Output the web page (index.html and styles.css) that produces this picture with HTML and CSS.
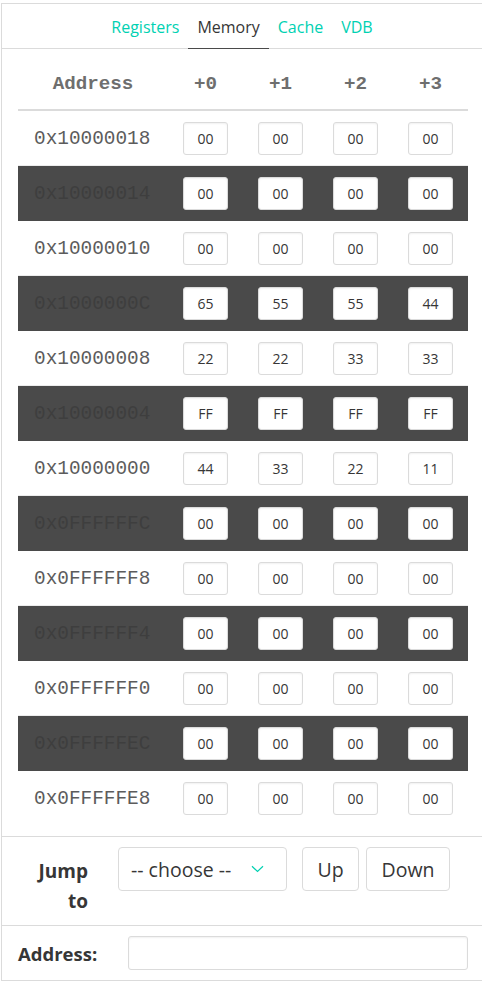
FILE: index.html
```html
<!DOCTYPE html>
<html>
<head>
<meta charset="utf-8">
<link rel="stylesheet" href="styles.css">
</head>
<body>
<div class="panel">
  <nav class="tabs">
    <ul>
      <li><a class="tab">Registers</a></li>
      <li><a class="tab active">Memory</a></li>
      <li><a class="tab">Cache</a></li>
      <li><a class="tab">VDB</a></li>
    </ul>
  </nav>
  <div class="table-wrap">
    <table class="mem">
      <thead>
        <tr><th class="addr-h">Address</th><th>+0</th><th>+1</th><th>+2</th><th>+3</th></tr>
      </thead>
      <tbody>
        <tr><td class="addr">0x10000018</td><td><span class="cell">00</span></td><td><span class="cell">00</span></td><td><span class="cell">00</span></td><td><span class="cell">00</span></td></tr>
        <tr class="dark"><td class="addr">0x10000014</td><td><span class="cell">00</span></td><td><span class="cell">00</span></td><td><span class="cell">00</span></td><td><span class="cell">00</span></td></tr>
        <tr><td class="addr">0x10000010</td><td><span class="cell">00</span></td><td><span class="cell">00</span></td><td><span class="cell">00</span></td><td><span class="cell">00</span></td></tr>
        <tr class="dark"><td class="addr">0x1000000C</td><td><span class="cell">65</span></td><td><span class="cell">55</span></td><td><span class="cell">55</span></td><td><span class="cell">44</span></td></tr>
        <tr><td class="addr">0x10000008</td><td><span class="cell">22</span></td><td><span class="cell">22</span></td><td><span class="cell">33</span></td><td><span class="cell">33</span></td></tr>
        <tr class="dark"><td class="addr">0x10000004</td><td><span class="cell">FF</span></td><td><span class="cell">FF</span></td><td><span class="cell">FF</span></td><td><span class="cell">FF</span></td></tr>
        <tr><td class="addr">0x10000000</td><td><span class="cell">44</span></td><td><span class="cell">33</span></td><td><span class="cell">22</span></td><td><span class="cell">11</span></td></tr>
        <tr class="dark"><td class="addr">0x0FFFFFFC</td><td><span class="cell">00</span></td><td><span class="cell">00</span></td><td><span class="cell">00</span></td><td><span class="cell">00</span></td></tr>
        <tr><td class="addr">0x0FFFFFF8</td><td><span class="cell">00</span></td><td><span class="cell">00</span></td><td><span class="cell">00</span></td><td><span class="cell">00</span></td></tr>
        <tr class="dark"><td class="addr">0x0FFFFFF4</td><td><span class="cell">00</span></td><td><span class="cell">00</span></td><td><span class="cell">00</span></td><td><span class="cell">00</span></td></tr>
        <tr><td class="addr">0x0FFFFFF0</td><td><span class="cell">00</span></td><td><span class="cell">00</span></td><td><span class="cell">00</span></td><td><span class="cell">00</span></td></tr>
        <tr class="dark"><td class="addr">0x0FFFFFEC</td><td><span class="cell">00</span></td><td><span class="cell">00</span></td><td><span class="cell">00</span></td><td><span class="cell">00</span></td></tr>
        <tr class="last"><td class="addr">0x0FFFFFE8</td><td><span class="cell">00</span></td><td><span class="cell">00</span></td><td><span class="cell">00</span></td><td><span class="cell">00</span></td></tr>
      </tbody>
    </table>
  </div>
  <div class="section jump">
    <div class="label jump-label">Jump to</div>
    <div class="controls">
      <div class="select">
        <span class="select-text">-- choose --</span>
        <svg class="chev" width="13" height="8" viewBox="0 0 13 8"><path d="M1 1.2 L6.5 6.5 L12 1.2" fill="none" stroke="#00d1b2" stroke-width="1.2"/></svg>
      </div>
      <div class="btns">
        <button class="btn">Up</button>
        <button class="btn">Down</button>
      </div>
    </div>
  </div>
  <div class="section addr-row">
    <div class="label addr-label">Address:</div>
    <div class="text-input"></div>
  </div>
</div>
</body>
</html>
```

FILE: styles.css
```css
html, body {
  margin: 0;
  padding: 0;
  background: #fff;
  overflow: hidden;
}
body {
  font-family: "Open Sans", "Noto Sans", sans-serif;
  color: #4a4a4a;
}
.panel {
  margin: 3px 0 0 1px;
  width: 481px;
  border: 1px solid #dbdbdb;
  border-right: 0;
  box-sizing: border-box;
}
.tabs {
  border-bottom: 1px solid #dbdbdb;
}
.tabs ul {
  list-style: none;
  margin: 0;
  padding: 0;
  display: flex;
  justify-content: center;
}
.tab {
  display: block;
  padding: 11px 9px 9px;
  font-size: 16px;
  line-height: 24px;
  color: #00d1b2;
  border-bottom: 1px solid transparent;
  margin-bottom: -1px;
}
.tab.active {
  color: #363636;
  border-bottom-color: #4a4a4a;
}
.table-wrap {
  padding: 10px 13px 10px 16px;
}
.mem {
  width: 450px;
  border-collapse: collapse;
  table-layout: fixed;
}
.mem th {
  height: 50px;
  padding: 0;
  font-family: "Liberation Mono", "Courier New", monospace;
  font-weight: bold;
  font-size: 19.2px;
  color: #6e6e6e;
  border-bottom: 2px solid #dbdbdb;
  text-align: center;
  width: 75px;
}
.mem th.addr-h {
  width: 150px;
}
.mem td {
  height: 54px;
  padding: 0;
  text-align: center;
  border-bottom: 1px solid #ececec;
}
.mem tr.last td {
  border-bottom-color: transparent;
}
.mem td.addr {
  font-family: "Liberation Mono", "Courier New", monospace;
  font-size: 19.4px;
  color: #5c5c5c;
  text-align: left;
  padding-left: 16px;
  padding-top: 2px;
  box-sizing: border-box;
}
.mem tr.dark td {
  background: #4a4a4a;
  border-bottom-color: #4a4a4a;
}
.mem tr.dark td.addr {
  color: #3e3e3e;
}
.cell {
  display: inline-block;
  box-sizing: border-box;
  width: 45px;
  height: 33px;
  line-height: 31px;
  border: 1px solid #dbdbdb;
  border-radius: 3px;
  background: #fff;
  font-size: 14px;
  color: #363636;
  vertical-align: middle;
  box-shadow: inset 0 1px 2px rgba(10,10,10,0.06);
}
.section {
  border-top: 1px solid #dbdbdb;
  display: flex;
  align-items: flex-start;
}
.label {
  font-weight: bold;
  color: #363636;
  text-align: right;
  box-sizing: border-box;
}
.jump {
  padding: 10px 0 9px 16px;
}
.jump-label {
  width: 70px;
  margin-right: 30px;
  font-size: 19px;
  line-height: 30px;
  padding-top: 9px;
}
.controls {
  display: flex;
  align-items: center;
  gap: 15px;
}
.select {
  box-sizing: border-box;
  width: 169px;
  height: 44px;
  border: 1px solid #dbdbdb;
  border-radius: 4px;
  display: flex;
  align-items: center;
  justify-content: space-between;
  padding: 1px 22px 0 12px;
  font-size: 19.5px;
  color: #363636;
}
.chev {
  margin-top: -2px;
}
.btns {
  display: flex;
  gap: 7px;
}
.btn {
  box-sizing: border-box;
  height: 44px;
  border: 1px solid #dbdbdb;
  border-radius: 4px;
  background: #fff;
  font-family: "Open Sans", "Noto Sans", sans-serif;
  font-size: 19.5px;
  color: #363636;
  padding: 1px 0 0;
}
.btn:first-child {
  width: 57px;
}
.btn:last-child {
  width: 84px;
}
.addr-row {
  padding: 10px 0 10px 16px;
  align-items: center;
}
.addr-label {
  width: 80px;
  margin-right: 30px;
  font-size: 18.5px;
  line-height: 33px;
  text-align: left;
}
.text-input {
  box-sizing: border-box;
  width: 340px;
  height: 34px;
  border: 1px solid #dbdbdb;
  border-radius: 3px;
  box-shadow: inset 0 1px 2px rgba(10,10,10,0.06);
}
```
